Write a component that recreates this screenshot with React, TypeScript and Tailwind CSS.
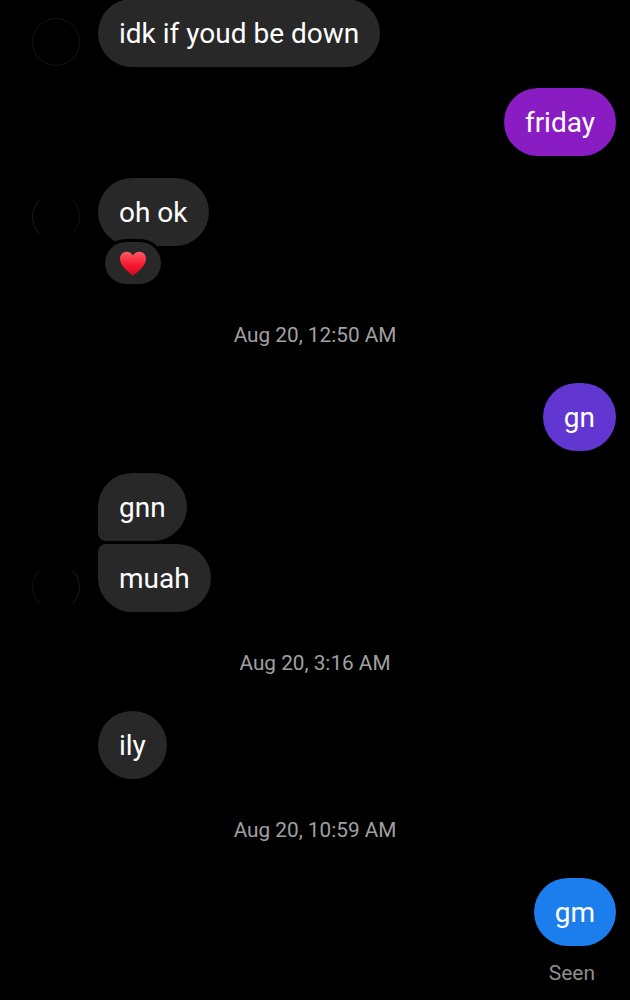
const font = { fontFamily: 'Roboto, "Liberation Sans", sans-serif' };

function Avatar({ variant = 'none' }: { variant?: 'full' | 'left' | 'right' | 'none' }) {
  if (variant === 'none') return <div className="h-12 w-12 shrink-0" />;
  return (
    <div
      className={
        variant === 'full'
          ? 'h-12 w-12 shrink-0 rounded-full border border-[#161616]'
          : variant === 'left'
            ? 'mb-[4px] h-12 w-12 shrink-0 rounded-full border border-transparent border-r-[#101010] border-l-[#181818]'
            : 'h-12 w-12 shrink-0 rounded-full border border-transparent border-r-[#181818] border-l-[#101010]'
      }
    />
  );
}

function Theirs({
  text,
  avatar = 'none',
  corners = 'rounded-[34px]',
  className = '',
}: {
  text: string;
  avatar?: 'full' | 'left' | 'right' | 'none';
  corners?: string;
  className?: string;
}) {
  return (
    <div className={`flex items-end gap-[18px] pl-8 ${className}`}>
      <div className="mb-[1px]">
        <Avatar variant={avatar} />
      </div>
      <div className={`flex h-[68px] items-center bg-[#282828] px-[21px] pt-px text-[28px] text-white ${corners}`}>
        {text}
      </div>
    </div>
  );
}

function Mine({ text, color, className = '' }: { text: string; color: string; className?: string }) {
  return (
    <div className={`flex justify-end pr-3.5 ${className}`}>
      <div className={`flex h-[68px] items-center rounded-[34px] px-[21px] pt-px text-[28px] text-white ${color}`}>
        {text}
      </div>
    </div>
  );
}

function Time({ text, className = '' }: { text: string; className?: string }) {
  return <div className={`text-center text-[20.75px] leading-[26px] text-[#a0a0a0] ${className}`}>{text}</div>;
}

function Heart() {
  return (
    <svg viewBox="0 0 28 26" className="h-[25px] w-[28px]">
      <defs>
        <linearGradient id="heartFill" x1="0" y1="0" x2="0" y2="1">
          <stop offset="0" stopColor="#ff5a66" />
          <stop offset="0.6" stopColor="#f5142c" />
          <stop offset="1" stopColor="#d80a20" />
        </linearGradient>
      </defs>
      <path
        d="M14 25.500C8.500 21 0.500 15.500 0.500 8C0.500 3.500 3.800 0.800 7.500 0.800C10.500 0.800 12.800 2.500 14 4.800C15.200 2.500 17.500 0.800 20.500 0.800C24.200 0.800 27.500 3.500 27.500 8C27.500 15.500 19.500 21 14 25.500Z"
        fill="url(#heartFill)"
      />
    </svg>
  );
}

export default function App() {
  return (
    <div className="h-[1000px] w-full overflow-hidden bg-black" style={font}>
      <Theirs text="idk if youd be down" avatar="full" className="-mt-px" />
      <Mine text="friday" color="bg-[#8a1cc4]" className="mt-[21px]" />

      <Theirs text="oh ok" avatar="left" className="mt-[22px]" />
      <div className="relative -mt-[7px] ml-[102px] flex h-[48px] w-[62px] items-center justify-center rounded-full border-[3px] border-black bg-[#282828]">
        <Heart />
      </div>

      <Time text="Aug 20, 12:50 AM" className="mt-[35px]" />
      <Mine text="gn" color="bg-[#6236d0]" className="mt-[35px]" />

      <Theirs text="gnn" corners="rounded-[34px] rounded-bl-[8px]" className="mt-[22px]" />
      <Theirs text="muah" avatar="right" corners="rounded-[34px] rounded-tl-[8px]" className="mt-[3px]" />

      <Time text="Aug 20, 3:16 AM" className="mt-[38px]" />
      <Theirs text="ily" className="mt-[35px]" />

      <Time text="Aug 20, 10:59 AM" className="mt-[38px]" />
      <Mine text="gm" color="bg-[#1c7eec]" className="mt-[35px]" />
      <div className="mt-[15px] pr-[35px] text-right text-[21px] leading-6 text-[#8e8e8e]">Seen</div>
    </div>
  );
}
